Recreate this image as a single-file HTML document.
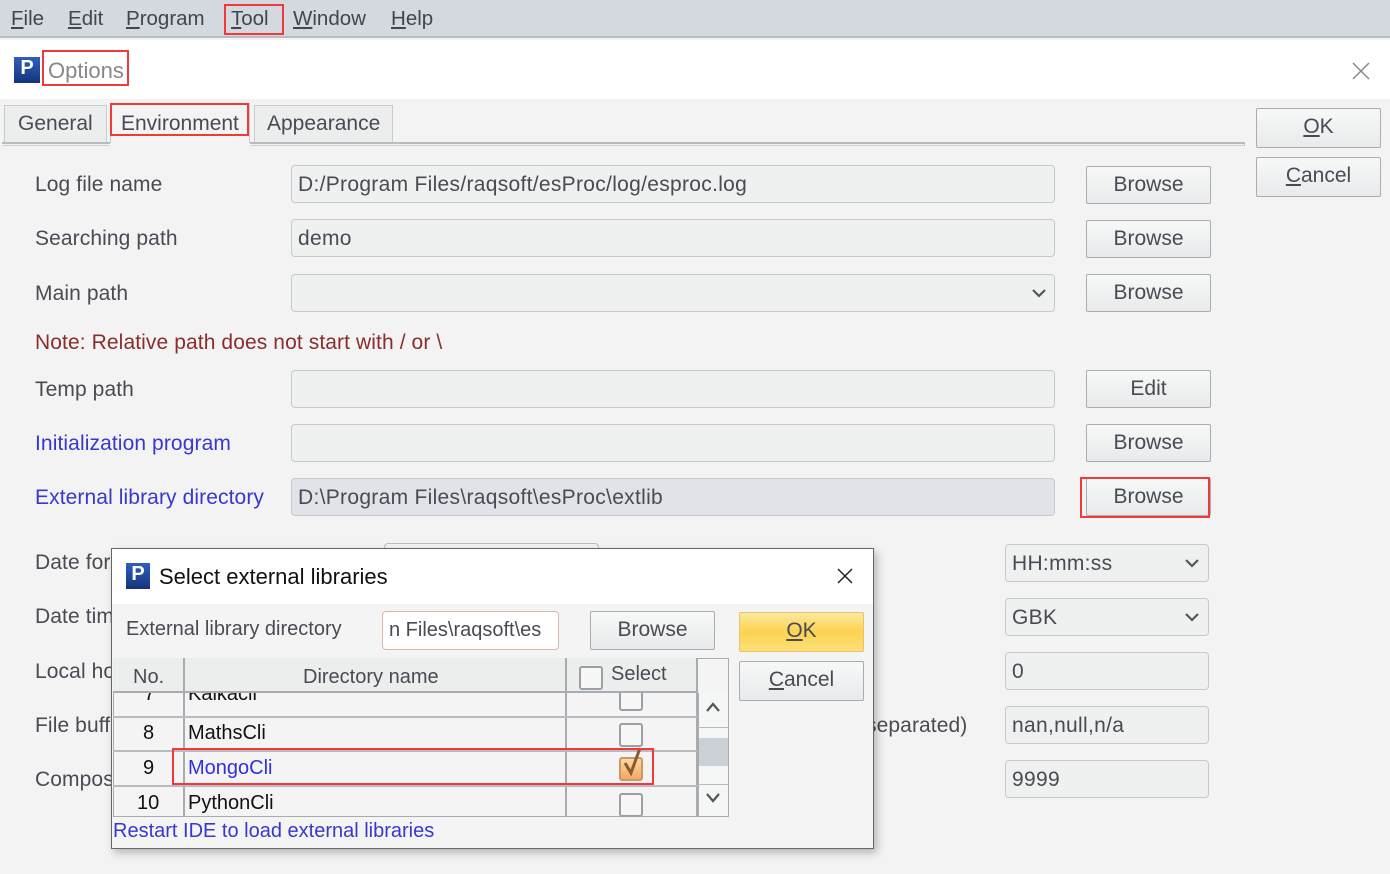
<!DOCTYPE html>
<html><head><meta charset="utf-8"><style>
*{box-sizing:border-box;margin:0;padding:0}
body{width:1390px;height:874px;overflow:hidden;background:#f2f3f2;font-family:"Liberation Sans",sans-serif;color:#4a4a55;position:relative}
.a{position:absolute}
.menu{left:0;top:0;width:1390px;height:38px;background:#d4d8df;border-bottom:2px solid #b8bcc3}
.menu span{position:absolute;top:7px;font-size:20.5px;color:#44444e}
.menu u{text-decoration:underline}
.red{border:2px solid #f03a3a}
.lbl{font-size:21px;color:#4a4a55;letter-spacing:0.1px}
.blue{color:#3838d0}
.inp{border:1px solid #c6c9cc;border-radius:4px;background:#eff0f0;font-size:21px;letter-spacing:0.3px;padding:7px 6px;color:#4a4a55;height:38px;white-space:nowrap;overflow:hidden}
.btn{border:1px solid #a9adb2;border-radius:2px;background:linear-gradient(#f7f8f8,#e8eaeb);font-size:21px;text-align:center;color:#4a4a55;height:38px;line-height:36px}
.logo{width:26px;height:26px;background:linear-gradient(#2f5fbf,#14347a);color:#fff;font-weight:bold;font-size:20px;text-align:center;line-height:22px}
.cb{width:24px;height:24px;border:2px solid #9aa0a6;border-radius:3px;background:#f7f7f7}
.cell{font-size:20px;color:#111}
</style></head><body>
<div class="a menu">
<span style="left:11px"><u>F</u>ile</span>
<span style="left:68px"><u>E</u>dit</span>
<span style="left:126px"><u>P</u>rogram</span>
<span style="left:231px"><u>T</u>ool</span>
<span style="left:293px"><u>W</u>indow</span>
<span style="left:391px"><u>H</u>elp</span>
</div>
<div class="a red" style="left:224px;top:4px;width:60px;height:31px"></div>
<div class="a" style="left:0;top:40px;width:1390px;height:59px;background:#fff"></div>
<div class="a logo" style="left:14px;top:57px">P</div>
<div class="a" style="left:48px;top:58px;font-size:22px;color:#888">Options</div>
<div class="a red" style="left:42px;top:50px;width:87px;height:36px"></div>
<svg class="a" style="left:1352px;top:62px" width="18" height="18"><path d="M1 1L17 17M17 1L1 17" stroke="#888" stroke-width="1.5"/></svg>

<div class="a" style="left:4px;top:105px;width:103px;height:37px;border:1px solid #c8cbcd;border-bottom:none;background:#eceeee;font-size:21px;padding:6px 0 0 13px">General</div>
<div class="a" style="left:110px;top:103px;width:140px;height:40px;background:#f2f3f2;border:1px solid #c8cbcd;border-bottom:none;font-size:21px;padding:8px 0 0 10px">Environment</div>
<div class="a red" style="left:110px;top:103px;width:139px;height:33px"></div>
<div class="a" style="left:254px;top:105px;width:139px;height:37px;border:1px solid #c8cbcd;border-bottom:none;background:#eceeee;font-size:21px;padding:6px 0 0 12px">Appearance</div>
<div class="a" style="left:2px;top:142px;width:108px;height:4px;border-top:2px solid #b8bcc0;border-bottom:1px solid #d0d2d4"></div>
<div class="a" style="left:250px;top:142px;width:995px;height:4px;border-top:2px solid #b8bcc0;border-bottom:1px solid #d0d2d4;border-right:1px solid #b8bcc0"></div>

<div class="a btn" style="left:1256px;top:108px;width:125px;height:40px;font-size:21px"><u>O</u>K</div>
<div class="a btn" style="left:1256px;top:157px;width:125px;height:40px;font-size:21px"><u>C</u>ancel</div>

<div class="a lbl" style="left:35px;top:173px">Log file name</div>
<div class="a inp" style="left:291px;top:165px;width:764px">D:/Program Files/raqsoft/esProc/log/esproc.log</div>
<div class="a btn" style="left:1086px;top:166px;width:125px">Browse</div>

<div class="a lbl" style="left:35px;top:227px">Searching path</div>
<div class="a inp" style="left:291px;top:219px;width:764px">demo</div>
<div class="a btn" style="left:1086px;top:220px;width:125px">Browse</div>

<div class="a lbl" style="left:35px;top:282px">Main path</div>
<div class="a inp" style="left:291px;top:274px;width:764px"></div>
<svg class="a" style="left:1031px;top:288px" width="16" height="10"><path d="M2 2L8 8L14 2" stroke="#555" stroke-width="2.2" fill="none"/></svg>
<div class="a btn" style="left:1086px;top:274px;width:125px">Browse</div>

<div class="a lbl" style="left:35px;top:331px;color:#8a2d2d">Note: Relative path does not start with / or \</div>

<div class="a lbl" style="left:35px;top:378px">Temp path</div>
<div class="a inp" style="left:291px;top:370px;width:764px"></div>
<div class="a btn" style="left:1086px;top:370px;width:125px">Edit</div>

<div class="a lbl blue" style="left:35px;top:432px">Initialization program</div>
<div class="a inp" style="left:291px;top:424px;width:764px"></div>
<div class="a btn" style="left:1086px;top:424px;width:125px">Browse</div>

<div class="a lbl blue" style="left:35px;top:486px">External library directory</div>
<div class="a inp" style="left:291px;top:478px;width:764px;background:#e0e3e7">D:\Program Files\raqsoft\esProc\extlib</div>
<div class="a btn" style="left:1086px;top:478px;width:125px">Browse</div>
<div class="a red" style="left:1080px;top:477px;width:130px;height:41px"></div>

<div class="a lbl" style="left:35px;top:551px">Date format</div>
<div class="a lbl" style="left:35px;top:605px">Date time</div>
<div class="a lbl" style="left:35px;top:660px">Local host</div>
<div class="a lbl" style="left:35px;top:714px">File buffer</div>
<div class="a lbl" style="left:35px;top:768px">Compose</div>
<div class="a lbl" style="left:866px;top:714px">separated)</div>
<div class="a" style="left:384px;top:543px;width:215px;height:10px;border:1px solid #b8bcc0;border-radius:4px"></div>

<div class="a inp" style="left:1005px;top:544px;width:204px">HH:mm:ss</div>
<svg class="a" style="left:1184px;top:558px" width="16" height="10"><path d="M2 2L8 8L14 2" stroke="#555" stroke-width="2.2" fill="none"/></svg>
<div class="a inp" style="left:1005px;top:598px;width:204px">GBK</div>
<svg class="a" style="left:1184px;top:612px" width="16" height="10"><path d="M2 2L8 8L14 2" stroke="#555" stroke-width="2.2" fill="none"/></svg>
<div class="a inp" style="left:1005px;top:652px;width:204px">0</div>
<div class="a inp" style="left:1005px;top:706px;width:204px">nan,null,n/a</div>
<div class="a inp" style="left:1005px;top:760px;width:204px">9999</div>

<!-- dialog -->
<div class="a" style="left:111px;top:548px;width:763px;height:301px;background:#f3f4f3;border:1px solid #666;box-shadow:3px 4px 8px rgba(0,0,0,.25)">
 <div class="a" style="left:0;top:0;width:761px;height:55px;background:#fff"></div>
 <div class="a logo" style="left:14px;top:14px;width:24px;height:26px">P</div>
 <div class="a" style="left:47px;top:15px;font-size:22px;color:#111">Select external libraries</div>
 <svg class="a" style="left:725px;top:19px" width="16" height="16"><path d="M1 1L15 15M15 1L1 15" stroke="#222" stroke-width="1.5"/></svg>
 <div class="a" style="left:14px;top:69px;font-size:20px;color:#4a4a55">External library directory</div>
 <div class="a inp" style="left:270px;top:62px;width:177px;height:39px;background:#fff;border-color:#d8b8a8;font-size:20px;letter-spacing:0">n Files\raqsoft\es</div>
 <div class="a btn" style="left:478px;top:62px;width:125px;height:39px">Browse</div>
 <div class="a btn" style="left:627px;top:63px;width:125px;height:40px;background:linear-gradient(#fde9a0,#fbd350 50%,#fde07a);border-color:#e7c46a;font-size:21px"><u>O</u>K</div>
 <div class="a btn" style="left:627px;top:112px;width:125px;height:40px;font-size:21px"><u>C</u>ancel</div>
 <!-- table -->
 <div class="a" style="left:1px;top:109px;width:616px;height:159px;border:1px solid #a8acb0;background:#f3f4f3"></div>
 <div class="a" style="left:1px;top:109px;width:584px;height:35px;background:#eceeee;border-bottom:2px solid #a8acb0"></div>
 <div class="a" style="left:71px;top:109px;width:2px;height:159px;background:#a8acb0"></div>
 <div class="a" style="left:453px;top:109px;width:2px;height:159px;background:#a8acb0"></div>
 <div class="a" style="left:584px;top:109px;width:2px;height:159px;background:#a8acb0"></div>
 <div class="a" style="left:1px;top:167px;width:584px;height:2px;background:#b8bcc0"></div>
 <div class="a" style="left:1px;top:201px;width:584px;height:2px;background:#b8bcc0"></div>
 <div class="a" style="left:1px;top:236px;width:584px;height:2px;background:#b8bcc0"></div>
 <div class="a" style="left:21px;top:117px;font-size:20px;color:#4a4a55">No.</div>
 <div class="a" style="left:191px;top:117px;font-size:20px;color:#4a4a55">Directory name</div>
 <div class="a cb" style="left:467px;top:117px"></div>
 <div class="a" style="left:499px;top:114px;font-size:20px;color:#4a4a55">Select</div>
 <div class="a" style="left:0;top:144px;width:584px;height:23px;overflow:hidden">
   <div class="a cell" style="left:32px;top:-10px">7</div>
   <div class="a cell" style="left:76px;top:-10px">Kalkacli</div>
   <div class="a cb" style="left:507px;top:-6px"></div>
 </div>
 <div class="a cell" style="left:31px;top:173px">8</div><div class="a cell" style="left:76px;top:173px">MathsCli</div><div class="a cb" style="left:507px;top:174px"></div>
 <div class="a cell" style="left:31px;top:208px">9</div><div class="a cell" style="left:76px;top:208px;color:#3030e0">MongoCli</div>
 <div class="a cb" style="left:507px;top:208px;background:linear-gradient(#fbd9a0,#f5a860);border-color:#c89a6a"></div>
 <svg class="a" style="left:508px;top:196px" width="24" height="34"><path d="M5 18L11 28L20 3" stroke="#8a5a30" stroke-width="3" fill="none"/></svg>
 <div class="a cell" style="left:25px;top:243px">10</div><div class="a cell" style="left:76px;top:243px">PythonCli</div><div class="a cb" style="left:507px;top:244px"></div>
 <div class="a red" style="left:60px;top:199px;width:482px;height:37px"></div>
 <!-- scrollbar -->
 <div class="a" style="left:586px;top:144px;width:30px;height:123px;background:#f5f6f6;border-left:1px solid #a8acb0"></div>
 <svg class="a" style="left:593px;top:152px" width="16" height="12"><path d="M2 10L8 3L14 10" stroke="#555" stroke-width="2.2" fill="none"/></svg>
 <div class="a" style="left:586px;top:178px;width:30px;height:58px;border-top:1px solid #b8bcc0;border-bottom:1px solid #b8bcc0"></div>
 <div class="a" style="left:587px;top:189px;width:29px;height:28px;background:#ccd1d7"></div>
 <svg class="a" style="left:593px;top:243px" width="16" height="12"><path d="M2 2L8 9L14 2" stroke="#555" stroke-width="2.2" fill="none"/></svg>
 <div class="a" style="left:1px;top:271px;font-size:20px;color:#3838d0">Restart IDE to load external libraries</div>
</div>
</body></html>
